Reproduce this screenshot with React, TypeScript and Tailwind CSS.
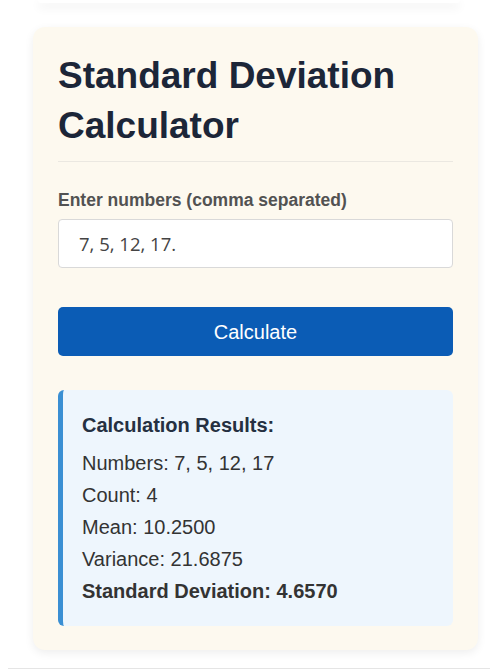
import { useState } from 'react';

function calc(raw: string) {
    const nums = raw
        .split(',')
        .map((s) => parseFloat(s.trim()))
        .filter((n) => !isNaN(n));
    const count = nums.length;
    const mean = nums.reduce((a, b) => a + b, 0) / count;
    const variance = nums.reduce((a, b) => a + (b - mean) ** 2, 0) / count;
    return { nums, count, mean, variance, sd: Math.sqrt(variance) };
}

export default function App() {
    const [value, setValue] = useState('7, 5, 12, 17.');
    const [result, setResult] = useState(() => calc('7, 5, 12, 17.'));

    return (
        <div className="min-h-screen bg-white font-['Liberation_Sans',Arial,sans-serif]">
            {/* --- tail of the previous card --- */}
            <div className="mx-[38px] h-[3px] rounded-b-xl bg-white shadow-[0_4px_10px_rgba(0,0,0,0.1)]"></div>

            <div className="ml-[33px] mt-[24px] w-[445px] rounded-xl bg-[#fdf9ef] px-[25px] pb-[24px] pt-[24px] shadow-[0_3px_10px_rgba(0,0,0,0.07)]">
                <h1 className="border-b border-[#ebe8e1] pb-[10px] text-[37px] font-bold leading-[50px] text-[#1c2638]">
                    Standard Deviation Calculator
                </h1>

                <label className="mt-[28px] block text-[17.5px] font-bold leading-[20px] text-[#525252]">
                    Enter numbers (comma separated)
                </label>
                <input
                    value={value}
                    onChange={(e) => setValue(e.target.value)}
                    className="mt-[9px] block h-[49px] w-full rounded-[4px] border border-[#d9d9d9] bg-white px-[20px] font-['Open_Sans',sans-serif] text-[18.5px] text-[#444] outline-none"
                />

                <button
                    onClick={() => setResult(calc(value))}
                    className="mt-[39px] block h-[49px] w-full rounded-[5px] bg-[#0b5cb5] text-[20px] text-white"
                >
                    Calculate
                </button>

                <div className="mt-[34px] rounded-md border-l-[5px] border-[#3a8fd3] bg-[#eef6fd] pb-[19px] pl-[19px] pt-[19px] text-[20px] leading-[32px] text-[#333]">
                    <h3 className="mb-[6px] font-bold text-[#253041]">Calculation Results:</h3>
                    <p>Numbers: {result.nums.join(', ')}</p>
                    <p>Count: {result.count}</p>
                    <p>Mean: {result.mean.toFixed(4)}</p>
                    <p>Variance: {result.variance.toFixed(4)}</p>
                    <p className="font-bold">Standard Deviation: {result.sd.toFixed(4)}</p>
                </div>
            </div>

            <div className="mx-[8px] mt-[18px] h-[3px] border-t border-[#e5e5e5]"></div>
        </div>
    );
}
